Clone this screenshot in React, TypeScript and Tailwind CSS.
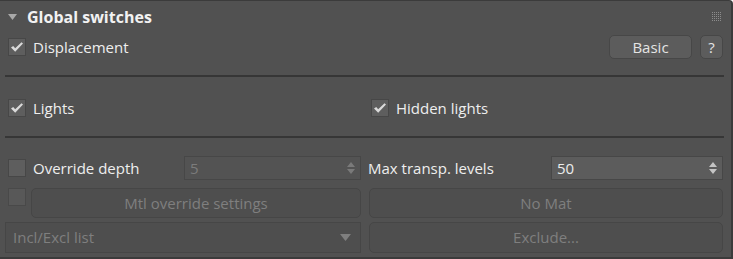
import React from "react";

const font = { fontFamily: '"Open Sans", "Noto Sans", sans-serif' };

const Check = ({ checked = false, disabled = false }: { checked?: boolean; disabled?: boolean }) => (
  <div
    className={`w-[18px] h-[18px] shrink-0 border flex items-center justify-center ${
      disabled ? "bg-[#585858] border-[#494949]" : "bg-[#5e5e5e] border-[#474747]"
    }`}
  >
    {checked && (
      <svg width="14" height="12" viewBox="0 0 14 12">
        <path d="M1 6.5 L3.2 5 L5.2 7.3 L11.5 1.2 L13 2.6 L5.2 10.8 Z" fill="#dadada" />
      </svg>
    )}
  </div>
);

const Spinner = ({ value, disabled = false }: { value: string; disabled?: boolean }) => (
  <div
    className={`flex items-center justify-between h-[24px] border pl-[5px] pr-[5px] ${
      disabled ? "bg-[#535353] border-[#474747] text-[#7c7c7c]" : "bg-[#5c5c5c] border-[#474747] text-[#ececec]"
    }`}
  >
    <span className="text-[15px] leading-none">{value}</span>
    <svg width="8" height="12" viewBox="0 0 8 12">
      <path d="M4 0 L8 5 L0 5 Z M0 7 L8 7 L4 12 Z" fill={disabled ? "#7a7a7a" : "#c4c4c4"} />
    </svg>
  </div>
);

const Btn = ({ label, className = "" }: { label: string; className?: string }) => (
  <div
    className={`flex items-center justify-center rounded-[5px] border border-[#464646] bg-[#4e4e4e] text-[#7f7f7f] text-[15px] ${className}`}
  >
    {label}
  </div>
);

export default function App() {
  return (
    <div
      style={font}
      className="w-[733px] h-[259px] bg-[#515151] border-t border-r-2 border-b-2 border-[#3b3b3b] rounded-tr-[4px] text-[#eeeeee] flex flex-col"
    >
      <div className="h-[31px] flex items-center pl-[8px] pr-[10px]">
        <svg width="9" height="6" viewBox="0 0 9 6" className="mr-[10px]">
          <path d="M0 0 L9 0 L4.5 6 Z" fill="#a8a8a8" />
        </svg>
        <span className="text-[16px] font-bold text-[#f2f2f2]">Global switches</span>
        <div className="ml-auto grid grid-cols-5 gap-[1px]">
          {Array.from({ length: 25 }).map((_, i) => (
            <div key={i} className="w-[1px] h-[1px] bg-[#8c8c8c]" />
          ))}
        </div>
      </div>

      <div className="mt-[3px] h-[24px] flex items-center pl-[8px] pr-[8px]">
        <Check checked />
        <span className="ml-[7px] text-[15px]">Displacement</span>
        <div className="ml-auto flex gap-[8px]">
          <div className="w-[83px] h-[24px] rounded-[5px] border border-[#474747] bg-[#5c5c5c] text-[#e4e4e4] text-[15px] flex items-center justify-center">
            Basic
          </div>
          <div className="w-[23px] h-[24px] rounded-[5px] border border-[#474747] bg-[#5c5c5c] text-[#e4e4e4] text-[15px] flex items-center justify-center">
            ?
          </div>
        </div>
      </div>

      <div className="mt-[16px] h-[2px] bg-[#363636] ml-[5px] mr-[7px]" />

      <div className="mt-[21px] h-[20px] flex items-center pl-[8px]">
        <div className="w-[363px] flex items-center">
          <Check checked />
          <span className="ml-[7px] text-[15px]">Lights</span>
        </div>
        <Check checked />
        <span className="ml-[7px] text-[15px]">Hidden lights</span>
      </div>

      <div className="mt-[18px] h-[2px] bg-[#363636] ml-[5px] mr-[7px]" />

      <div className="mt-[18px] flex items-center pl-[5px] pr-[8px] gap-[7px]">
        <div className="w-[356px] flex items-center">
          <div className="ml-[3px]">
            <Check />
          </div>
          <span className="ml-[7px] text-[15px] w-[151px]">Override depth</span>
          <div className="flex-1">
            <Spinner value="5" disabled />
          </div>
        </div>
        <div className="flex-1 flex items-center">
          <span className="text-[15px] w-[183px]">Max transp. levels</span>
          <div className="flex-1">
            <Spinner value="50" />
          </div>
        </div>
      </div>

      <div className="mt-[8px] flex items-start pl-[5px] pr-[8px] gap-[8px]">
        <div className="w-[356px] flex items-start gap-[5px]">
          <div className="ml-[3px]">
            <Check disabled />
          </div>
          <Btn label="Mtl override settings" className="flex-1 h-[30px]" />
        </div>
        <Btn label="No Mat" className="flex-1 h-[30px]" />
      </div>

      <div className="mt-[4px] flex items-center pl-[5px] pr-[8px] gap-[8px]">
        <div className="w-[356px] h-[31px] border border-[#464646] bg-[#4e4e4e] flex items-center justify-between pl-[7px] pr-[9px] text-[#7f7f7f] text-[15px]">
          <span>Incl/Excl list</span>
          <svg width="11" height="7" viewBox="0 0 11 7">
            <path d="M0 0 L11 0 L5.5 7 Z" fill="#7f7f7f" />
          </svg>
        </div>
        <Btn label="Exclude..." className="flex-1 h-[31px]" />
      </div>
    </div>
  );
}
